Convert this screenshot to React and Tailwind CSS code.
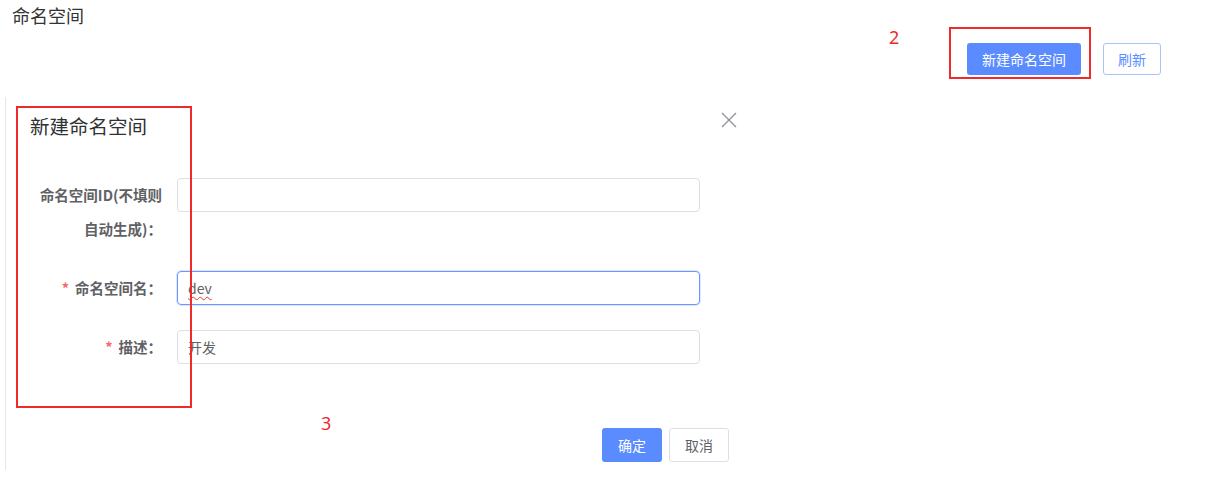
import { useState } from "react";

const font = { fontFamily: '"Microsoft YaHei", "Noto Sans CJK SC", "Noto Sans", sans-serif' };
const markFont = { fontFamily: '"Noto Sans", "Liberation Sans", sans-serif' };

function FormRow({ label, required, children }) {
  return (
    <div className="flex items-start mb-[25px]">
      <div className="w-[146px] shrink-0 pr-[15px] text-right text-[14.5px] font-bold text-[#5f6166] leading-[34px] whitespace-nowrap">
        {required && <span className="text-[#f56c6c] mr-[6px]">*</span>}
        {label}
      </div>
      <div className="w-[523px]">{children}</div>
    </div>
  );
}

export default function App() {
  const [name, setName] = useState("dev");
  const [desc, setDesc] = useState("开发");
  const [nsId, setNsId] = useState("");

  return (
    <div className="relative w-[1214px] h-[493px] bg-white overflow-hidden" style={font}>
      {/* page header */}
      <div className="pt-[3px] px-[12px]">
        <h1 className="text-[18px] leading-[24px] text-[#333] font-normal">命名空间</h1>
        <div className="flex justify-end gap-[22px] mt-[16px] pr-[41px]">
          <button className="h-[32px] w-[114px] rounded-[3px] bg-[#5b8cff] text-white text-[14px]">
            新建命名空间
          </button>
          <button className="h-[32px] w-[58px] rounded-[3px] border border-[#a9c3ff] bg-white text-[#5b8cff] text-[14px]">
            刷新
          </button>
        </div>
      </div>

      {/* dialog */}
      <div className="relative mt-[22px] ml-[5px] w-[743px] border-l border-[#e6e6e6] pl-[25px] pt-[17px] pb-[8px]">
        <h2 className="text-[19.5px] leading-[24px] text-[#303133] font-normal -ml-px">新建命名空间</h2>
        <button className="absolute left-[714px] top-[14px] w-[18px] h-[18px] text-[#909399]">
          <svg viewBox="0 0 18 18" width="18" height="18" fill="none" stroke="currentColor" strokeWidth="1.4">
            <path d="M2 2 L16 16 M16 2 L2 16" />
          </svg>
        </button>

        <div className="mt-[40px]">
          <FormRow
            label={
              <>
                命名空间ID(不填则
                <br />
                自动生成)：
              </>
            }
          >
            <input
              value={nsId}
              onChange={(e) => setNsId(e.target.value)}
              className="w-full h-[34px] rounded-[4px] border border-[#dcdfe6] px-[10px] text-[14px] text-[#606266] outline-none"
            />
          </FormRow>
          <FormRow label="命名空间名：" required>
            <div className="relative">
              <input
                value={name}
                onChange={(e) => setName(e.target.value)}
                className="w-full h-[34px] rounded-[4px] border border-[#6b97ff] shadow-[0_0_0_1px_#dbe6ff] px-[10px] text-[14px] text-transparent caret-[#606266] outline-none"
              />
              <span className="pointer-events-none absolute left-[11px] top-0 leading-[34px] text-[14px] text-[#606266] underline decoration-wavy decoration-[#e53935] decoration-1 underline-offset-2">
                {name}
              </span>
            </div>
          </FormRow>
          <FormRow label="描述：" required>
            <input
              value={desc}
              onChange={(e) => setDesc(e.target.value)}
              className="w-full h-[34px] rounded-[4px] border border-[#dcdfe6] px-[10px] text-[14px] text-[#606266] outline-none"
            />
          </FormRow>
        </div>

        <div className="flex justify-end gap-[7px] mt-[64px] pr-[20px] -mr-[1px]">
          <button className="h-[34px] w-[60px] rounded-[3px] bg-[#5b8cff] text-white text-[14px]">确定</button>
          <button className="h-[34px] w-[60px] rounded-[3px] border border-[#dcdfe6] bg-white text-[#606266] text-[14px]">
            取消
          </button>
        </div>
      </div>

      {/* screenshot annotations */}
      <div className="absolute left-[949px] top-[27px] w-[142px] h-[52px] border-2 border-[#ee2a2a] pointer-events-none" />
      <span className="absolute left-[889px] top-[25px] text-[18px] leading-[24px] text-[#ee2a2a]" style={markFont}>
        2
      </span>
      <div className="absolute left-[16px] top-[106px] w-[176px] h-[302px] border-2 border-[#ee2a2a] pointer-events-none" />
      <span className="absolute left-[321px] top-[411px] text-[18px] leading-[24px] text-[#ee2a2a]" style={markFont}>
        3
      </span>
    </div>
  );
}
